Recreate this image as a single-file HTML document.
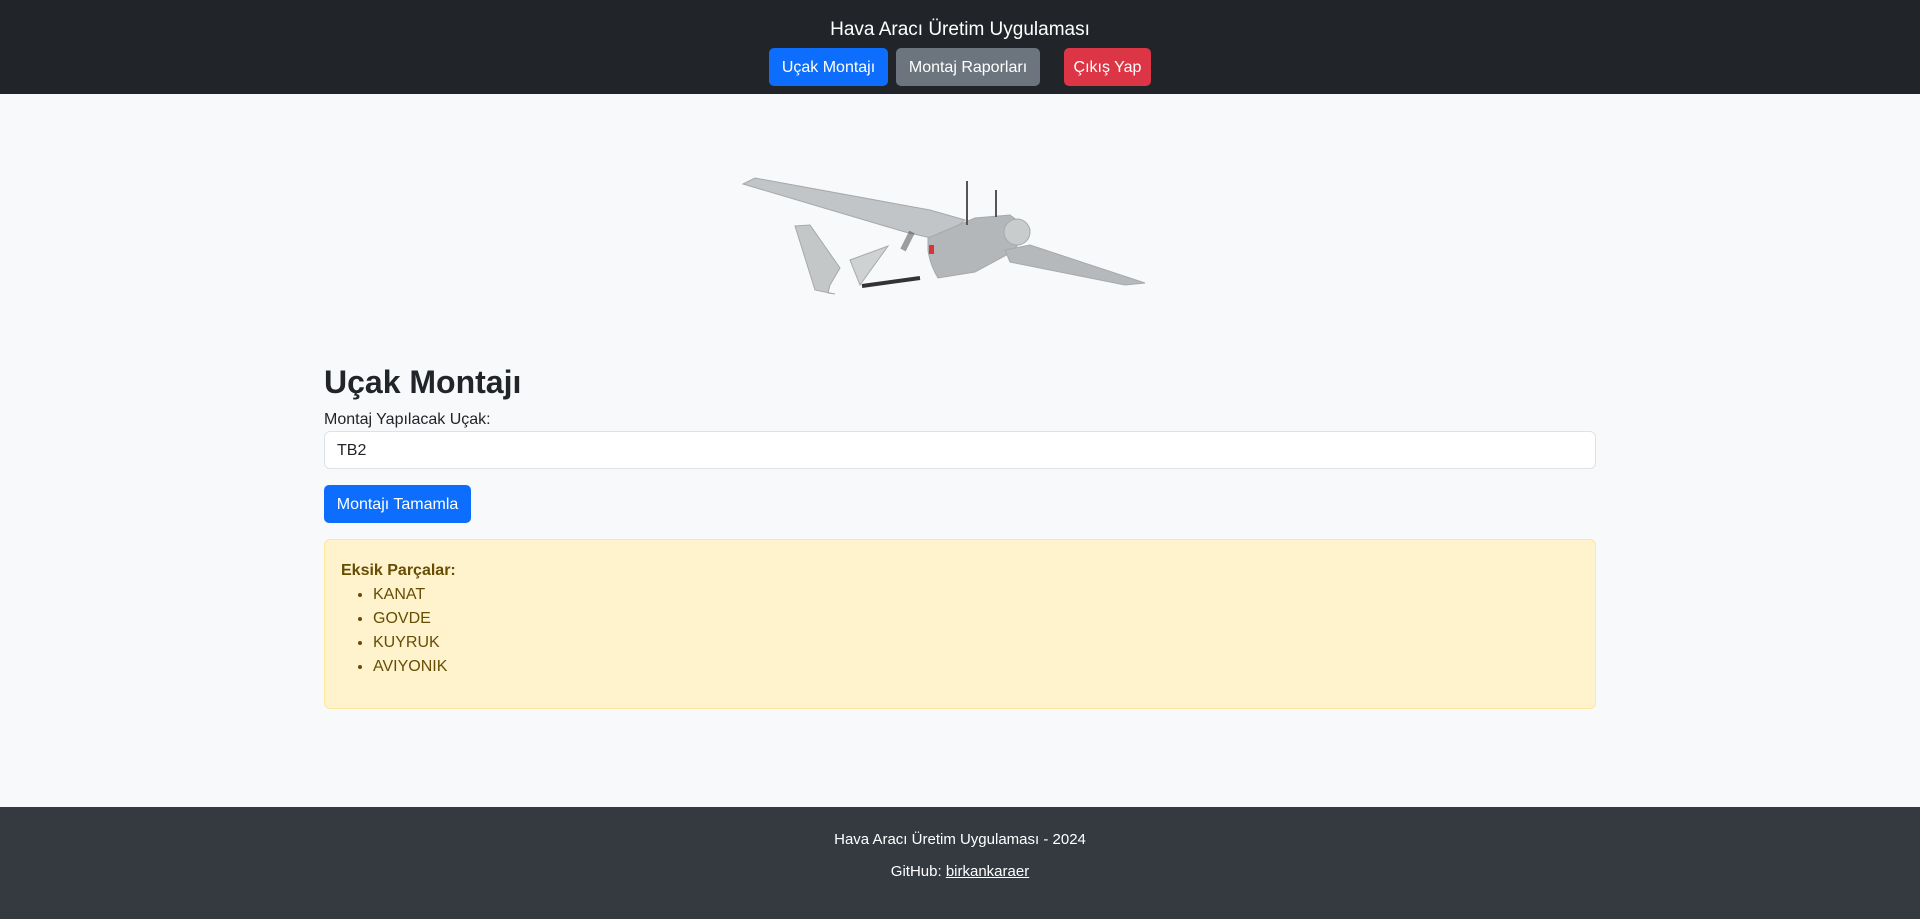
<!DOCTYPE html>
<html><head><meta charset="utf-8"><style>
*{box-sizing:border-box;margin:0;padding:0}
body{width:1920px;height:919px;background:#f8f9fa;font-family:"Liberation Sans",sans-serif;color:#212529;position:relative;overflow:hidden}
header{position:absolute;left:0;top:0;width:1920px;height:94px;background:#212529;color:#fff;text-align:center}
header h1{font-size:19px;font-weight:400;position:absolute;top:19px;width:100%}
.btn{position:absolute;height:38px;border-radius:5px;color:#fff;font-size:16px;line-height:39px;text-align:center}
footer{position:absolute;left:0;top:807px;width:1920px;height:112px;background:#343a40;color:#fff;text-align:center;font-size:15px}
.c{position:absolute;left:324px;width:1272px}
</style></head><body>
<header><h1>Hava Aracı Üretim Uygulaması</h1>
<div class="btn" style="left:769px;top:48px;width:119px;background:#0d6efd">Uçak Montajı</div>
<div class="btn" style="left:896px;top:48px;width:144px;background:#6c757d">Montaj Raporları</div>
<div class="btn" style="left:1064px;top:48px;width:87px;background:#dc3545">Çıkış Yap</div>
</header>
<svg style="position:absolute;left:0;top:0" width="1920" height="400">
<g fill="#b9bcbe" stroke="#a6a9ab" stroke-width="1">
<path d="M795,226 L810,225 L840,268 L830,285 L828,293 L835,294 L815,290 Z" fill="#c4c7c8"/>
<path d="M850,260 L888,246 L860,285 Z" fill="#cfd2d3"/>
<path d="M743,184 L755,178 L930,210 L965,220 L940,240 L905,232 Z" fill="#c2c5c7"/>
<path d="M928,238 L975,218 L1010,215 L1030,230 L1012,252 L975,272 L938,278 Q930,265 928,250 Z" fill="#b4b7b9"/>
<path d="M1005,250 L1030,245 L1145,283 L1125,285 L1010,262 Z" fill="#b6b9bb"/>
<circle cx="1017" cy="232" r="13" fill="#c9cccd"/>
</g>
<path d="M862,286 L920,278" stroke="#333" stroke-width="4"/>
<path d="M967,181 L967,225 M996,190 L996,217" stroke="#555" stroke-width="2"/>
<path d="M903,250 L912,232" stroke="#444" stroke-width="6" opacity=".5"/>
<rect x="929" y="245" width="5" height="9" fill="#d33"/>
</svg>
<div class="c" style="top:362px;font-size:32px;font-weight:bold;line-height:40px">Uçak Montajı</div>
<div class="c" style="top:410px;font-size:16px;line-height:20px">Montaj Yapılacak Uçak:</div>
<div class="c" style="top:431px;height:38px;background:#fff;border:1px solid #dee2e6;border-radius:6px;padding-left:12px;line-height:37px;font-size:16px">TB2</div>
<div class="btn" style="left:324px;top:485px;width:147px;background:#0d6efd">Montajı Tamamla</div>
<div class="c" style="top:539px;height:170px;background:#fff3cd;border:1px solid #ffe69c;border-radius:6px;color:#664d03;padding:19px 16px;font-size:16px;line-height:24px">
<b>Eksik Parçalar:</b>
<ul style="padding-left:32px"><li>KANAT</li><li>GOVDE</li><li>KUYRUK</li><li>AVIYONIK</li></ul>
</div>
<footer><div style="position:absolute;top:24px;width:100%">Hava Aracı Üretim Uygulaması - 2024</div>
<div style="position:absolute;top:56px;width:100%">GitHub: <u>birkankaraer</u></div></footer>
</body></html>
